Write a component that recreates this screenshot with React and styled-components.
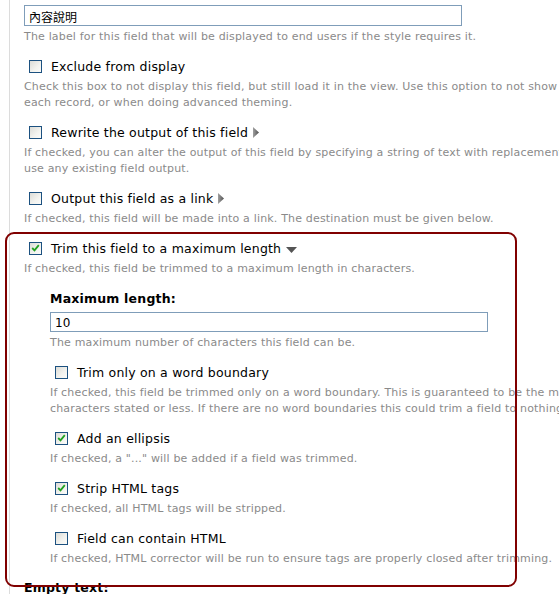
import React from 'react';
import styled, { createGlobalStyle } from 'styled-components';

const GlobalStyle = createGlobalStyle`
    html, body {
        margin: 0;
        padding: 0;
        background: #fff;
        overflow: hidden;
    }
    body {
        font-family: "DejaVu Sans", Verdana, sans-serif;
        color: #000;
    }
`;

const Page = styled.div`
    margin-left: 9px;
    border-left: 1px solid #dcdcdc;
    padding: 5px 0 40px 14px;
    width: 720px;
    min-height: 600px;
`;

const TextInput = styled.input`
    display: block;
    box-sizing: border-box;
    width: 438px;
    height: ${(p) => p.$h || 21}px;
    border: 1px solid #7f9db9;
    padding: 1px 4px 0;
    font-family: "DejaVu Sans", "Noto Sans CJK TC", sans-serif;
    font-size: 12px;
    color: #000;
    outline: none;
`;

const Item = styled.div`
    margin-bottom: 12px;
`;

const Description = styled.div`
    font-size: 11px;
    letter-spacing: 0.17px;
    line-height: 16px;
    color: #8a8a8a;
    white-space: nowrap;
    margin-top: ${(p) => p.$top || 4}px;
`;

const CheckRow = styled.label`
    display: flex;
    align-items: center;
    height: 18px;
    padding-left: 5px;
    font-size: 12.5px;
    letter-spacing: 0.2px;
    color: #000;
`;

const Box = styled.span`
    box-sizing: border-box;
    width: 13px;
    height: 13px;
    margin-right: 9px;
    border: 1px solid #1c5180;
    background: linear-gradient(135deg, #dcdcd7 0%, #f3f3ef 60%, #fbfbf9 100%);
    display: flex;
    align-items: center;
    justify-content: center;
    flex-shrink: 0;
`;

const Arrow = styled.svg`
    margin-left: 5px;
`;

const Nested = styled.div`
    padding-left: 26px;
    margin-top: 13px;
`;

const FieldLabel = styled.div`
    font-size: 12.5px;
    font-weight: bold;
    letter-spacing: 0.2px;
    line-height: 18px;
    margin-bottom: 4px;
`;

const Group = styled.div`
    position: relative;
`;

const Annotation = styled.div`
    position: absolute;
    top: -7px;
    left: -19px;
    width: 512px;
    bottom: -20px;
    box-sizing: border-box;
    border: 2px solid #800000;
    border-radius: 9px;
    pointer-events: none;
`;

const Checkbox = ({ checked }) => (
    <Box>
        {checked && (
            <svg width="9" height="8" viewBox="0 0 9 8">
                <path d="M1.2 4 L3.5 6.3 L7.8 1.2" fill="none" stroke="#21a121" strokeWidth="1.8" />
            </svg>
        )}
    </Box>
);

const RightArrow = () => (
    <Arrow width="6" height="11" viewBox="0 0 6 11">
        <defs>
            <linearGradient id="ra" x1="0" y1="0" x2="1" y2="0">
                <stop offset="0" stopColor="#a0a0a0" />
                <stop offset="1" stopColor="#505050" />
            </linearGradient>
        </defs>
        <path d="M0 0 L6 5.5 L0 11 Z" fill="url(#ra)" />
    </Arrow>
);

const DownArrow = () => (
    <Arrow width="11" height="6" viewBox="0 0 11 6" style={{ marginTop: 3 }}>
        <path d="M0 0 L11 0 L5.5 6 Z" fill="#555" />
    </Arrow>
);

const Option = ({ checked, label, arrow, children }) => (
    <Item>
        <CheckRow>
            <Checkbox checked={checked} />
            {label}
            {arrow === 'right' && <RightArrow />}
            {arrow === 'down' && <DownArrow />}
        </CheckRow>
        <Description>{children}</Description>
    </Item>
);

const App = () => {
    return (
        <>
            <GlobalStyle />
            <Page>
                <Item>
                    <TextInput defaultValue="內容說明" />
                    <Description $top={3}>
                        The label for this field that will be displayed to end users if the style requires it.
                    </Description>
                </Item>

                <Option label="Exclude from display">
                    Check this box to not display this field, but still load it in the view. Use this option to not show a grouping field in
                    <br />
                    each record, or when doing advanced theming.
                </Option>

                <Option label="Rewrite the output of this field" arrow="right">
                    If checked, you can alter the output of this field by specifying a string of text with replacement tokens that can
                    <br />
                    use any existing field output.
                </Option>

                <Option label="Output this field as a link" arrow="right">
                    If checked, this field will be made into a link. The destination must be given below.
                </Option>

                <Group>
                    <Annotation />
                    <Item>
                        <CheckRow>
                            <Checkbox checked />
                            Trim this field to a maximum length
                            <DownArrow />
                        </CheckRow>
                        <Description>
                            If checked, this field be trimmed to a maximum length in characters.
                        </Description>

                        <Nested>
                            <Item>
                                <FieldLabel>Maximum length:</FieldLabel>
                                <TextInput defaultValue="10" $h={20} />
                                <Description $top={3}>
                                    The maximum number of characters this field can be.
                                </Description>
                            </Item>

                            <Option label="Trim only on a word boundary">
                                If checked, this field be trimmed only on a word boundary. This is guaranteed to be the maximum
                                <br />
                                characters stated or less. If there are no word boundaries this could trim a field to nothing.
                            </Option>

                            <Option checked label="Add an ellipsis">
                                If checked, a "..." will be added if a field was trimmed.
                            </Option>

                            <Option checked label="Strip HTML tags">
                                If checked, all HTML tags will be stripped.
                            </Option>

                            <Option label="Field can contain HTML">
                                If checked, HTML corrector will be run to ensure tags are properly closed after trimming.
                            </Option>
                        </Nested>
                    </Item>
                </Group>

                <FieldLabel>Empty text:</FieldLabel>
            </Page>
        </>
    );
};

export default App;
